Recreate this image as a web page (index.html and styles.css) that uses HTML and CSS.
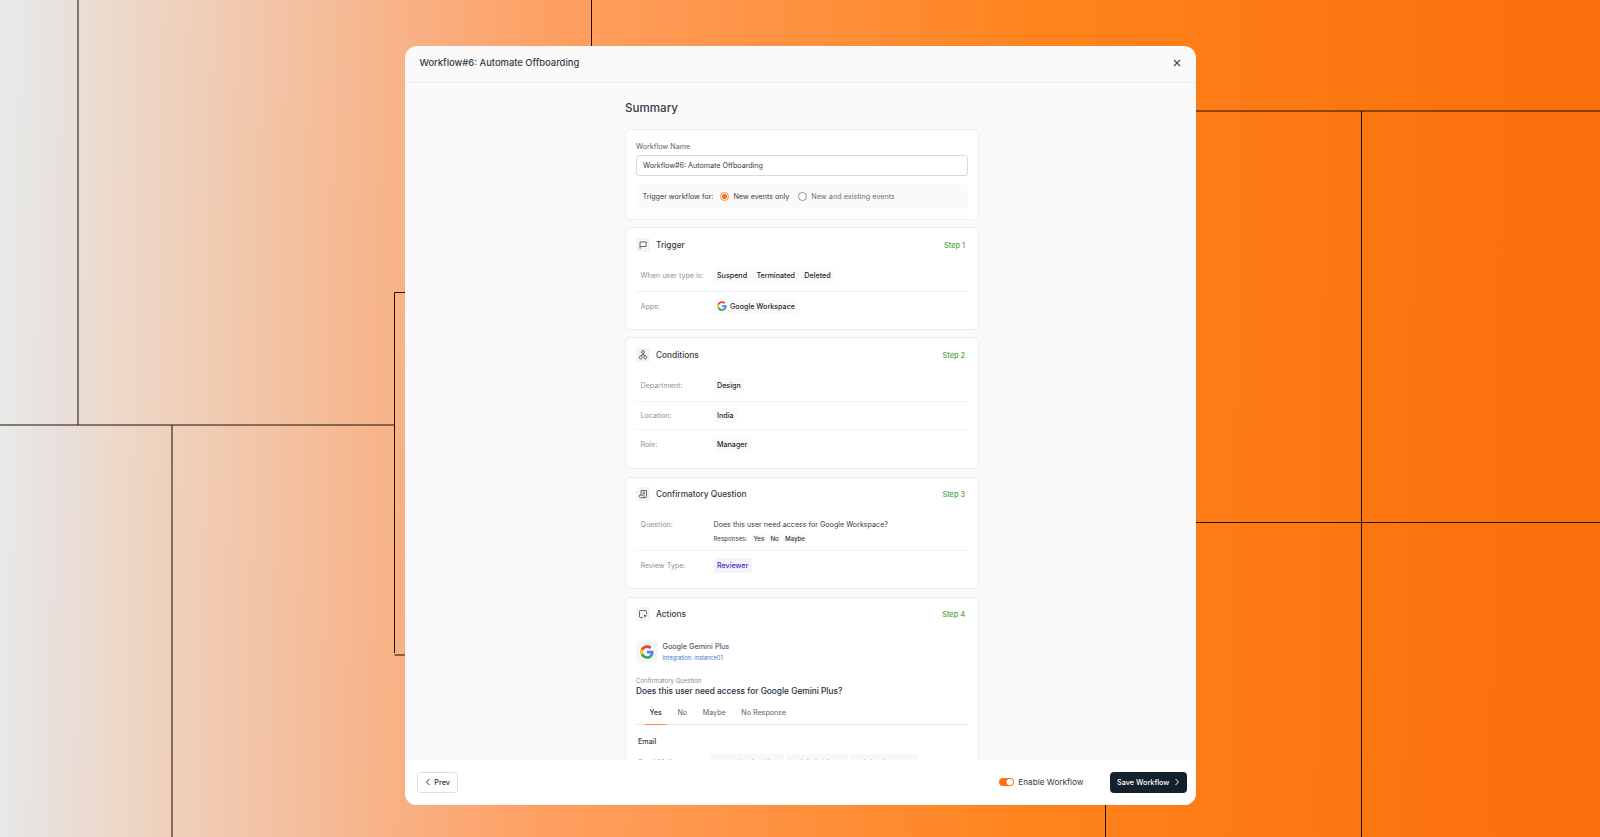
FILE: index.html
```html
<!DOCTYPE html>
<html lang="en">
<head>
	<meta charset="utf-8">
	<meta name="viewport" content="width=device-width, initial-scale=1">
	<title>Workflow#6: Automate Offboarding</title>
	<link rel="stylesheet" href="styles.css">
</head>
<body>

<!-- google logo, used twice -->
<svg width="0" height="0" class="defs">
	<symbol id="google" viewBox="0 0 48 48">
		<path fill="#FFC107" d="M10.5 28.7A14 14 0 0 1 10.5 19.3L3 13.5A22.5 22.5 0 0 0 3 34.5Z"/>
		<path fill="#EA4335" d="M24 10c3.500 0 6.600 1.200 9 3.500l6.700-6.700C35.700 3 30.200.8 24 .8 15 .8 7 6 3 13.500l7.600 5.900C12.400 13.900 17.700 10 24 10z"/>
		<path fill="#4285F4" d="M46.500 24.500c0-1.600-.1-3.100-.4-4.500H24v8.900h12.700c-.6 3-2.200 5.400-4.700 7.100l7.300 5.700c4.500-4.100 7.200-10.200 7.200-17.200z"/>
		<path fill="#34A853" d="M24 47.200c6.200 0 11.400-2 15.300-5.500L32 36c-2.100 1.400-4.800 2.200-8 2.200-6.300 0-11.600-4-13.500-9.500L3 34.500C7 42.100 15 47.200 24 47.200z"/>
	</symbol>
</svg>

<div class="page">
	<svg class="lines" width="1600" height="837" viewBox="0 0 1600 837">
		<path d="M78 0V425M0 425H394.500M172 425V837M591.500 0V60M410 292.500H394.500V653M394.500 655H410M1190 111H1600M1361.500 111V837M1190 522.500H1600M1105.500 790V837"/>
	</svg>

	<div class="modal">
		<div class="modal-header">
			<span class="modal-title">Workflow#6: Automate Offboarding</span>
			<svg class="close" viewBox="0 0 8 8"><path d="M1 1L7 7M7 1L1 7"/></svg>
		</div>

		<div class="modal-body">
			<h1>Summary</h1>

			<div class="card card-name">
				<label class="field-label">Workflow Name</label>
				<div class="input">Workflow#6: Automate Offboarding</div>
				<div class="events">
					<span>Trigger workflow for:</span>
					<i class="radio on"></i><span class="opt">New events only</span>
					<i class="radio"></i><span class="opt-off">New and existing events</span>
				</div>
			</div>

			<div class="card card-trigger">
				<div class="card-head">
					<div class="icon"><svg viewBox="0 0 14 14"><path d="M4 11V4H10.200V8.500H4"/></svg></div>
					<h2>Trigger</h2>
					<span class="step">Step 1</span>
				</div>
				<div class="row">
					<span class="key">When user type is:</span>
					<span class="tag">Suspend</span><span class="tag">Terminated</span><span class="tag">Deleted</span>
				</div>
				<div class="row">
					<span class="key">Apps:</span>
					<span class="tag"><svg class="g-small"><use href="#google"/></svg>Google Workspace</span>
				</div>
			</div>

			<div class="card card-conditions">
				<div class="card-head">
					<div class="icon"><svg viewBox="0 0 14 14"><circle cx="7" cy="4" r="1.500"/><circle cx="4.700" cy="9.500" r="1.500"/><circle cx="9.300" cy="9.500" r="1.500"/><path d="M7 5.500V7M5 8L5.500 7H8.500L9 8"/></svg></div>
					<h2>Conditions</h2>
					<span class="step">Step 2</span>
				</div>
				<div class="row"><span class="key">Department:</span><span class="tag">Design</span></div>
				<div class="row"><span class="key">Location:</span><span class="tag">India</span></div>
				<div class="row"><span class="key">Role:</span><span class="tag">Manager</span></div>
			</div>

			<div class="card card-question">
				<div class="card-head">
					<div class="icon"><svg viewBox="0 0 14 14"><path d="M5 8V3.500H10.500V9.500A1.200 1.200 0 0 1 9.300 10.700H4.500A1.200 1.200 0 0 1 3.400 9.500V8.200H7.800V9.500A1.200 1.200 0 0 0 9 10.700M6.600 5.200H9M6.600 6.700H9"/></svg></div>
					<h2>Confirmatory Question</h2>
					<span class="step">Step 3</span>
				</div>
				<div class="row row-question">
					<span class="key">Question:</span>
					<div>
						<div class="question">Does this user need access for Google Workspace?</div>
						<div class="responses"><span>Responses:</span><b>Yes</b><b>No</b><b>Maybe</b></div>
					</div>
				</div>
				<div class="row"><span class="key">Review Type:</span><span class="tag purple">Reviewer</span></div>
			</div>

			<div class="card card-actions">
				<div class="card-head">
					<div class="icon"><svg viewBox="0 0 14 14"><path d="M7 10.500H4.300A.8.800 0 0 1 3.500 9.700V4.300A.8.800 0 0 1 4.300 3.500H9.700A.8.800 0 0 1 10.500 4.300V7"/><path class="fill" d="M7.700 7.500L11 8.800L9.500 9.400L8.900 11Z"/></svg></div>
					<h2>Actions</h2>
					<span class="step">Step 4</span>
				</div>
				<div class="app">
					<div class="app-logo"><svg><use href="#google"/></svg></div>
					<div>
						<div class="app-name">Google Gemini Plus</div>
						<div class="app-link">Integration: instance01</div>
					</div>
				</div>
				<div class="caption">Confirmatory Question</div>
				<div class="big-question">Does this user need access for Google Gemini Plus?</div>
				<div class="tabs">
					<span class="tab active">Yes</span>
					<span class="tab">No</span>
					<span class="tab">Maybe</span>
					<span class="tab">No Response</span>
				</div>
				<div class="email">Email</div>
				<div class="mail-row">
					<span class="mail-key">Send Mail to:</span>
					<span class="mail">reporting head</span>
					<span class="mail">michal risk</span>
					<span class="mail">michael ross</span>
				</div>
			</div>
		</div>

		<div class="modal-footer">
			<button class="btn prev"><svg viewBox="0 0 6 8"><path d="M4.500 1L1.500 4L4.500 7"/></svg>Prev</button>
			<div class="toggle"></div>
			<span class="toggle-label">Enable Workflow</span>
			<button class="btn save">Save Workflow<svg viewBox="0 0 6 8"><path d="M1.500 1L4.500 4L1.500 7"/></svg></button>
		</div>
	</div>
</div>

</body>
</html>
```
FILE: styles.css
```css
* {
	box-sizing: border-box;
}
body {
	margin: 0;
	font-family: Inter, sans-serif;
	color: #333c48;
}
h1, h2 {
	margin: 0;
}
svg {
	display: block;
	fill: none;
}
.defs {
	position: absolute;
}
.page {
	position: relative;
	width: 1600px;
	height: 837px;
	overflow: hidden;
	padding: 46px 0 0 404.500px;
	background: linear-gradient(91deg, #e8e8e7 1%, #e8e0dc 4%, #ecdacc 7%, #f7b48a 24%, #ffa063 34%, #ff831c 65%, #fb6f0c 97%);
}
/* thin decorative lines behind the modal */
.lines {
	position: absolute;
	top: 0;
	left: 0;
	stroke: #1c0f05;
	stroke-width: 1;
}
.modal {
	position: relative;
	display: flex;
	flex-direction: column;
	width: 791px;
	height: 758.500px;
	border-radius: 12px;
	background: #fafafa;
	overflow: hidden;
}
.modal-header {
	display: flex;
	flex: none;
	align-items: center;
	justify-content: space-between;
	height: 36.500px;
	padding: 0 14.500px 2px 15px;
	border-bottom: 1px solid #ececed;
}
.modal-title {
	font-size: 9.400px;
	font-weight: 500;
}
.close {
	width: 8px;
	height: 8px;
	stroke: #3c4650;
	stroke-width: 1.1;
}

/* body */
.modal-body {
	flex: 1;
	min-height: 0;
	overflow: hidden;
	padding: 0 217px 0 220.500px;
}
h1 {
	height: 46.500px;
	padding-top: 17px;
	font-size: 11.600px;
	line-height: 16px;
	font-weight: 500;
}
.card {
	border: 1px solid #eeeeef;
	border-radius: 6px;
	background: #fff;
	padding: 0 10px;
	margin-bottom: 7.500px;
	box-shadow: 0 0 1px #eee;
}
.card-name {
	height: 90.500px;
	padding-top: 11px;
}
.card-trigger {
	height: 102.500px;
}
.card-conditions {
	height: 132px;
}
.card-question {
	height: 112.800px;
}
.card-actions {
	height: 200px;
}
.field-label {
	display: block;
	font-size: 7.200px;
	line-height: 11px;
	color: #5c6570;
}
.input {
	height: 21px;
	margin-top: 3px;
	padding-left: 6px;
	border: 1px solid #d9dadd;
	border-radius: 3px;
	font-size: 7.150px;
	line-height: 19px;
}
.events {
	display: flex;
	align-items: center;
	height: 25px;
	margin-top: 8px;
	padding-left: 6.500px;
	border-radius: 3px;
	background: #fafafa;
	font-size: 7.150px;
}
.radio {
	width: 9.500px;
	height: 9.500px;
	margin: 0 4px 0 6.500px;
	border: 1px solid #8d939a;
	border-radius: 50%;
	background: #fff;
}
.radio.on {
	border-color: #f98a3c;
	background: radial-gradient(circle, #f97316 2.200px, #fff 2.800px);
}
.opt + .radio {
	margin-left: 8.500px;
}
.opt-off {
	font-size: 7.250px;
	color: #66707a;
}
.card-head {
	display: flex;
	align-items: center;
	height: 33.200px;
}
.icon {
	width: 14px;
	height: 14px;
	border-radius: 2px;
	background: #f3f4f5;
}
.icon svg {
	width: 14px;
	height: 14px;
	stroke: #3f4852;
	stroke-width: .8;
}
.icon .fill {
	fill: #3f4852;
	stroke: none;
}
h2 {
	margin-left: 6px;
	font-size: 8.300px;
	font-weight: 500;
}
.step {
	margin-left: auto;
	margin-right: 2.500px;
	padding-top: 1px;
	font-size: 7.350px;
	font-weight: 500;
	color: #54a547;
}
.row {
	display: flex;
	align-items: center;
	height: 28.800px;
	padding-left: 4.500px;
	border-bottom: 1px solid #f2f2f3;
	font-size: 7.150px;
}
.row:last-child {
	border-bottom: 0;
}
.key {
	width: 73px;
	color: #8b9198;
}
.tag {
	display: flex;
	align-items: center;
	height: 15px;
	margin-right: 2.300px;
	padding: 0 3.500px;
	border-radius: 2px;
	background: #fafafa;
	font-weight: 500;
	color: #1c2630;
}
.tag.purple {
	background: #f5f2ff;
	color: #4a2ab8;
}
.g-small {
	width: 10px;
	height: 10px;
	margin-right: 3px;
}
.row.row-question {
	align-items: flex-start;
	height: 39.500px;
	margin-top: 1px;
	padding-top: 8px;
}
.question, .row-question .key {
	line-height: 10px;
}
.responses {
	display: flex;
	align-items: center;
	height: 11px;
	margin-top: 3px;
	font-size: 6.150px;
}
.responses span {
	margin-right: 4.500px;
}
.responses b {
	padding: 1px 2px;
	margin-right: 2.200px;
	border-radius: 2px;
	background: #fafafa;
	font-weight: 500;
}
.card-trigger .card-head + .row,
.card-conditions .card-head + .row {
	height: 30.500px;
}

/* actions card */
.app {
	display: flex;
	align-items: center;
	height: 22px;
	margin-top: 10.300px;
}
.app-logo {
	width: 22px;
	height: 22px;
	margin-right: 4.500px;
	padding: 4px;
	border-radius: 3px;
	background: #f6f6f7;
}
.app-logo svg {
	width: 14px;
	height: 14px;
}
.app-name {
	font-size: 7.250px;
	line-height: 12px;
}
.app-link {
	font-size: 5.650px;
	line-height: 10px;
	color: #3c7cc8;
}
.caption {
	margin-top: 12.800px;
	font-size: 6.100px;
	line-height: 9px;
	color: #858c94;
}
.big-question {
	font-size: 8.300px;
	line-height: 13px;
	font-weight: 500;
	color: #26303b;
}
.tabs {
	display: flex;
	height: 27px;
	padding-left: 9px;
	border-bottom: 1px solid #e9e9ea;
	font-size: 7.150px;
	line-height: 30px;
	color: #5a636d;
}
.tab {
	height: 27px;
	margin-right: 6.600px;
	padding: 0 4.500px;
}
.tab.active {
	border-bottom: 1px solid #f98a4a;
	color: #26303b;
	font-weight: 500;
}
.email {
	margin: 12px 0 0 2px;
	font-size: 7.200px;
	line-height: 10px;
	font-weight: 500;
}
.mail-row {
	display: grid;
	grid-template-columns: 72.500px 73px 61px 69px;
	column-gap: 2.500px;
	margin-top: 7px;
	font-size: 7.200px;
	line-height: 17px;
	color: #8b9198;
}
.mail-key {
	padding-left: 2px;
}
.mail {
	padding-left: 8px;
	background: #f8f8f8;
}

/* footer */
.modal-footer {
	display: flex;
	flex: none;
	align-items: center;
	height: 45px;
	padding: 0 9px 0 12.500px;
	background: #fff;
}
.btn {
	display: flex;
	align-items: center;
	justify-content: space-between;
	height: 21px;
	padding: 0 7px;
	border: 1px solid #dcdde0;
	border-radius: 3.500px;
	background: #fff;
	font-family: inherit;
	font-size: 7.300px;
	font-weight: 500;
	color: #2b3540;
}
.btn svg {
	width: 6px;
	height: 8px;
	stroke: currentColor;
}
.prev {
	width: 41px;
	margin-right: auto;
}
.save {
	width: 76.500px;
	margin-left: 26.500px;
	padding: 0 6px;
	border-color: #14202c;
	background: #14202c;
	color: #fff;
}
.toggle {
	width: 15px;
	height: 8.500px;
	margin-right: 4.500px;
	border-radius: 5px;
	background: radial-gradient(circle at 10.700px 50%, #fff 3px, #f97316 3.500px);
}
.toggle-label {
	font-size: 8.200px;
}
```
